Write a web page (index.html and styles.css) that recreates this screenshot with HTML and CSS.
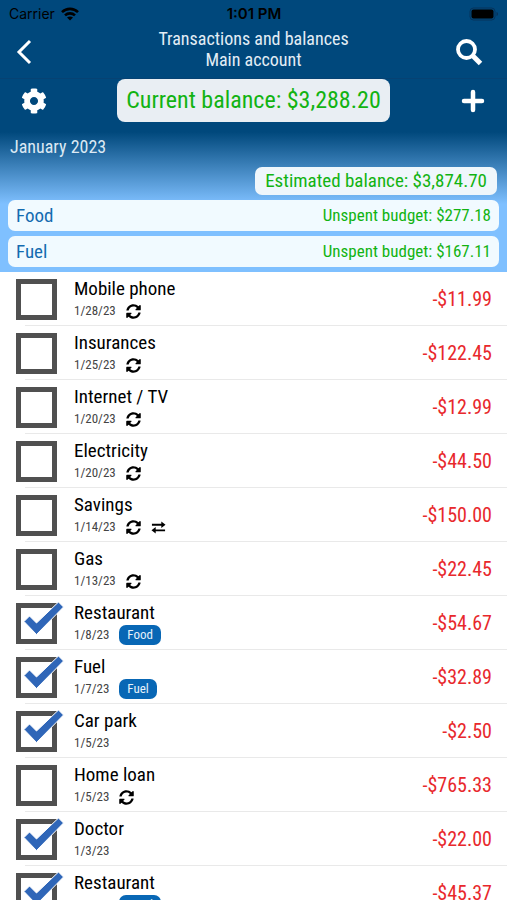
FILE: index.html
```html
<!DOCTYPE html>
<html lang="en">
<head>
    <meta charset="UTF-8">
    <meta name="viewport" content="width=device-width, initial-scale=1.0">
    <title>Transactions and balances</title>
    <link rel="stylesheet" href="styles.css">
</head>
<body>
    <!-- Shared icons -->
    <svg class="sprite" aria-hidden="true">
        <symbol id="repeat" viewBox="0 0 512 512">
            <path d="M370.72 133.28C339.458 104.008 298.888 87.962 255.848 88c-77.458.068-144.328 53.178-162.791 126.85-1.344 5.363-6.122 9.15-11.651 9.15H24.103c-7.498 0-13.194-6.807-11.807-14.176C33.933 94.924 134.813 8 256 8c66.448 0 126.791 26.136 171.315 68.685L463.03 40.97C478.149 25.851 504 36.559 504 57.941V192c0 13.255-10.745 24-24 24H345.941c-21.382 0-32.09-25.851-16.971-40.971l41.75-41.749zM32 296h134.059c21.382 0 32.09 25.851 16.971 40.971l-41.75 41.75c31.262 29.273 71.835 45.319 114.876 45.28 77.418-.07 144.315-53.144 162.787-126.849 1.344-5.363 6.122-9.15 11.651-9.15h57.304c7.498 0 13.194 6.807 11.807 14.176C478.067 417.076 377.187 504 256 504c-66.448 0-126.791-26.136-171.315-68.685L48.97 471.03C33.851 486.149 8 475.441 8 454.059V320c0-13.255 10.745-24 24-24z"/>
        </symbol>
        <symbol id="transfer" viewBox="0 0 16 14">
            <path d="M1 3h10V.5L15.5 4 11 7.500V5H1zM15 9H5V6.500L.5 10 5 13.500V11h10z"/>
        </symbol>
        <symbol id="tick" viewBox="0 0 42 36">
            <path d="M2 20.500 7.500 15 14.500 22 36.500 1 41.500 6 14.500 33.500z" fill="#2f66b8" stroke="#fff" stroke-width="1"/>
        </symbol>
    </svg>

    <header>
        <div class="status">
            <div class="carrier">
                <span>Carrier</span>
                <svg width="18" height="14" viewBox="0 0 18 14" fill="none" stroke="#000" stroke-width="2.600">
                    <path d="M1 5.200C5.500.7 12.500.7 17 5.200M4 8.400C6.800 5.700 11.200 5.700 14 8.400"/>
                    <path d="M9 13.500 6 10.500C7.700 9 10.300 9 12 10.500z" fill="#000" stroke="none"/>
                </svg>
            </div>
            <div class="time">1:01 PM</div>
            <div class="battery">
                <svg width="30" height="14" viewBox="0 0 30 14">
                    <rect x="1" y="1" width="25" height="12" rx="3.500" fill="none" stroke="#06335a"/>
                    <rect x="2.500" y="2.500" width="22" height="9" rx="2"/>
                    <path d="M27.500 5v4c2-.5 2-3.500 0-4z" fill="#06335a"/>
                </svg>
            </div>
        </div>

        <div class="nav">
            <button type="button" aria-label="Back">
                <svg width="48" height="28" viewBox="0 0 48 28" fill="none" stroke="#fff" stroke-width="3"><path d="M20 2 9 13 20 24"/></svg>
            </button>
            <h1>Transactions and balances<br>Main account</h1>
            <button type="button" aria-label="Search">
                <svg width="48" height="28" viewBox="0 0 48 28" fill="none" stroke="#fff"><circle cx="17.500" cy="10.500" r="8.500" stroke-width="3.800"/><path d="M23.500 16.500 31.500 24.500" stroke-width="5"/></svg>
            </button>
        </div>

        <div class="nav balance-bar">
            <button type="button" aria-label="Settings">
                <svg width="26" height="26" viewBox="0 0 512 512" fill="#fff">
                    <path d="M487.4 315.7l-42.6-24.6c4.300-23.200 4.300-47 0-70.200l42.600-24.600c4.900-2.800 7.100-8.600 5.500-14-11.100-35.600-30-67.800-54.700-94.600-3.800-4.100-10-5.100-14.800-2.300L380.800 110c-17.900-15.400-38.500-27.300-60.800-35.100V25.800c0-5.600-3.900-10.500-9.400-11.700-36.700-8.200-74.300-7.800-109.200 0-5.500 1.200-9.400 6.100-9.400 11.700V75c-22.200 7.900-42.800 19.800-60.800 35.100L88.700 85.500c-4.900-2.800-11-1.900-14.800 2.300-24.700 26.700-43.600 58.900-54.700 94.600-1.700 5.400.6 11.200 5.500 14L67.300 221c-4.300 23.200-4.300 47 0 70.200l-42.600 24.600c-4.900 2.800-7.100 8.600-5.500 14 11.100 35.600 30 67.800 54.700 94.600 3.800 4.100 10 5.100 14.800 2.300l42.600-24.600c17.900 15.400 38.500 27.300 60.800 35.100v49.200c0 5.600 3.900 10.500 9.400 11.700 36.700 8.200 74.300 7.800 109.200 0 5.500-1.200 9.400-6.100 9.400-11.700v-49.200c22.200-7.900 42.800-19.800 60.800-35.100l42.600 24.600c4.900 2.800 11 1.900 14.800-2.300 24.700-26.700 43.600-58.900 54.700-94.600 1.500-5.500-.7-11.300-5.600-14.100zM256 336c-44.100 0-80-35.900-80-80s35.900-80 80-80 80 35.900 80 80-35.900 80-80 80z"/>
                </svg>
            </button>
            <div class="current">Current balance: $3,288.20</div>
            <button type="button" aria-label="Add">
                <svg width="28" height="28" viewBox="0 0 28 28" fill="none" stroke="#fff" stroke-width="4.500" stroke-linecap="round"><path d="M14 5v18M5 14h18"/></svg>
            </button>
        </div>

        <div class="month">
            <h2>January 2023</h2>
            <div class="estimated">Estimated balance: $3,874.70</div>
            <div class="budget"><span class="budget-name">Food</span><span>Unspent budget: $277.18</span></div>
            <div class="budget"><span class="budget-name">Fuel</span><span>Unspent budget: $167.11</span></div>
        </div>
    </header>

    <main>
        <ul class="list">
            <li>
                <div class="check"><input type="checkbox" id="t1"></div>
                <div class="info">
                    <label for="t1">Mobile phone</label>
                    <div class="details">1/28/23 <svg class="icon"><use href="#repeat"/></svg></div>
                </div>
                <div class="amount">-$11.99</div>
            </li>
            <li>
                <div class="check"><input type="checkbox" id="t2"></div>
                <div class="info">
                    <label for="t2">Insurances</label>
                    <div class="details">1/25/23 <svg class="icon"><use href="#repeat"/></svg></div>
                </div>
                <div class="amount">-$122.45</div>
            </li>
            <li>
                <div class="check"><input type="checkbox" id="t3"></div>
                <div class="info">
                    <label for="t3">Internet / TV</label>
                    <div class="details">1/20/23 <svg class="icon"><use href="#repeat"/></svg></div>
                </div>
                <div class="amount">-$12.99</div>
            </li>
            <li>
                <div class="check"><input type="checkbox" id="t4"></div>
                <div class="info">
                    <label for="t4">Electricity</label>
                    <div class="details">1/20/23 <svg class="icon"><use href="#repeat"/></svg></div>
                </div>
                <div class="amount">-$44.50</div>
            </li>
            <li>
                <div class="check"><input type="checkbox" id="t5"></div>
                <div class="info">
                    <label for="t5">Savings</label>
                    <div class="details">1/14/23 <svg class="icon"><use href="#repeat"/></svg><svg class="icon"><use href="#transfer"/></svg></div>
                </div>
                <div class="amount">-$150.00</div>
            </li>
            <li>
                <div class="check"><input type="checkbox" id="t6"></div>
                <div class="info">
                    <label for="t6">Gas</label>
                    <div class="details">1/13/23 <svg class="icon"><use href="#repeat"/></svg></div>
                </div>
                <div class="amount">-$22.45</div>
            </li>
            <li>
                <div class="check"><input type="checkbox" id="t7" checked><svg class="tick"><use href="#tick"/></svg></div>
                <div class="info">
                    <label for="t7">Restaurant</label>
                    <div class="details">1/8/23 <span class="tag">Food</span></div>
                </div>
                <div class="amount">-$54.67</div>
            </li>
            <li>
                <div class="check"><input type="checkbox" id="t8" checked><svg class="tick"><use href="#tick"/></svg></div>
                <div class="info">
                    <label for="t8">Fuel</label>
                    <div class="details">1/7/23 <span class="tag">Fuel</span></div>
                </div>
                <div class="amount">-$32.89</div>
            </li>
            <li>
                <div class="check"><input type="checkbox" id="t9" checked><svg class="tick"><use href="#tick"/></svg></div>
                <div class="info">
                    <label for="t9">Car park</label>
                    <div class="details">1/5/23</div>
                </div>
                <div class="amount">-$2.50</div>
            </li>
            <li>
                <div class="check"><input type="checkbox" id="t10"></div>
                <div class="info">
                    <label for="t10">Home loan</label>
                    <div class="details">1/5/23 <svg class="icon"><use href="#repeat"/></svg></div>
                </div>
                <div class="amount">-$765.33</div>
            </li>
            <li>
                <div class="check"><input type="checkbox" id="t11" checked><svg class="tick"><use href="#tick"/></svg></div>
                <div class="info">
                    <label for="t11">Doctor</label>
                    <div class="details">1/3/23</div>
                </div>
                <div class="amount">-$22.00</div>
            </li>
            <li>
                <div class="check"><input type="checkbox" id="t12" checked><svg class="tick"><use href="#tick"/></svg></div>
                <div class="info">
                    <label for="t12">Restaurant</label>
                    <div class="details">1/2/23 <span class="tag">Food</span></div>
                </div>
                <div class="amount">-$45.37</div>
            </li>
        </ul>
    </main>
</body>
</html>
```

FILE: styles.css
```css
* {
  box-sizing: border-box;
}

body {
  margin: 0;
  height: 100vh;
  display: flex;
  flex-direction: column;
  overflow: hidden;
  font-family: "Avenir Next Condensed", "Roboto Condensed", "Liberation Sans Narrow", sans-serif;
  background-color: #ffffff;
  color: #000000;
}

.sprite {
  position: absolute;
  width: 0;
  height: 0;
}

header {
  flex: none;
  background: linear-gradient(#00487c 132px, #7fc0ff 204px);
}

.status {
  display: grid;
  grid-template-columns: 1fr auto 1fr;
  align-items: center;
  height: 27px;
  padding: 0 8px 0 9px;
  font-family: "Inter", sans-serif;
  font-size: 14px;
}

.carrier {
  display: flex;
  align-items: center;
  gap: 6px;
}

.time {
  font-size: 15px;
  font-weight: 600;
}

.battery {
  display: flex;
  justify-content: flex-end;
}

.nav {
  display: flex;
  justify-content: space-between;
  align-items: center;
  height: 52px;
  padding: 0 10px;
  border-bottom: 1px solid #064273;
}

.nav button {
  display: flex;
  justify-content: center;
  width: 48px;
  padding: 0;
  border: none;
  background: none;
  cursor: pointer;
}

.nav h1 {
  margin: 0;
  padding-bottom: 8px;
  font-size: 18px;
  font-weight: normal;
  line-height: 21px;
  text-align: center;
  color: #e3edf5;
}

.balance-bar {
  height: 43px;
  border-bottom: none;
}

.current {
  padding: 0 9px;
  border-radius: 8px;
  background-color: #e9eef3;
  font-size: 24px;
  line-height: 43px;
  color: #12b312;
}

.month {
  display: flex;
  flex-direction: column;
  gap: 5px;
  padding: 13px 8px 5px;
}

.month h2 {
  margin: 0 2px 3px;
  font-size: 18px;
  font-weight: normal;
  line-height: 24px;
  color: #dce9f4;
}

.estimated {
  align-self: flex-end;
  margin-right: 2px;
  padding: 0 10px;
  border-radius: 7px;
  background-color: #eff6fb;
  font-size: 19px;
  line-height: 28px;
  color: #12b312;
}

.budget {
  display: flex;
  justify-content: space-between;
  padding: 0 8px;
  border-radius: 7px;
  background-color: #f1faff;
  font-size: 17px;
  line-height: 31px;
  color: #12b312;
}

.budget-name {
  font-size: 19px;
  color: #146bb0;
}

.list {
  margin: 0;
  padding: 0;
  list-style: none;
}

.list li {
  display: flex;
  align-items: center;
  height: 54px;
  padding: 0 15px 0 16px;
  background: linear-gradient(#e9e9e9, #e9e9e9) 25px 100% / 100% 1px no-repeat;
}

.check {
  position: relative;
  display: flex;
  margin-right: 17px;
}

.check input {
  appearance: none;
  width: 41px;
  height: 41px;
  margin: 0;
  border: 5px solid #505050;
  background-color: #ffffff;
}

.tick {
  position: absolute;
  top: -2px;
  left: 6px;
  width: 42px;
  height: 36px;
  pointer-events: none;
}

.info {
  flex: 1;
}

.info label {
  display: block;
  font-size: 19px;
  line-height: 24px;
}

.details {
  display: flex;
  align-items: center;
  gap: 10px;
  height: 20px;
  font-size: 13px;
  line-height: 20px;
  color: #444444;
}

.icon {
  width: 15px;
  height: 15px;
  fill: #000000;
}

.tag {
  padding: 0 8px;
  border-radius: 7px;
  background-color: #0867b5;
  color: #e6f1fa;
}

.amount {
  font-size: 20px;
  color: #e8282c;
}
```
